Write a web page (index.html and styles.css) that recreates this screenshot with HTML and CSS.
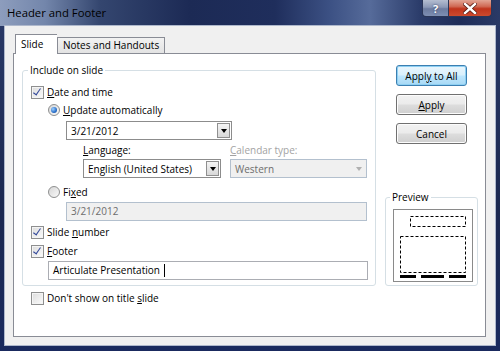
FILE: index.html
```html
<!DOCTYPE html>
<html lang="en">

<head>
    <meta charset="UTF-8">
    <title>Header and Footer</title>
    <link rel="stylesheet" href="styles.css">
</head>

<body>
    <div class="window">
        <div class="titlebar">
            <span class="title">Header and Footer</span>
            <div class="caption-btns">
                <span class="cap-btn help">?</span>
                <span class="cap-btn close">
                    <svg width="14" height="11" viewBox="0 0 14 11">
                        <path d="M2 1 L12 10 M12 1 L2 10" stroke="#5a1c14" stroke-width="4" stroke-linecap="square" />
                        <path d="M2 1 L12 10 M12 1 L2 10" stroke="#fff" stroke-width="2.4" stroke-linecap="square" />
                    </svg>
                </span>
            </div>
        </div>

        <div class="client">
            <div class="tabs">
                <div class="tab active">Slide</div>
                <div class="tab">Notes and Handouts</div>
            </div>

            <div class="panel">
                <div class="main-col">
                    <fieldset class="group include">
                        <legend>Include on slide</legend>

                        <div class="row">
                            <span class="checkbox checked"></span>
                            <span><u>D</u>ate and time</span>
                        </div>
                        <div class="row indent-1">
                            <span class="radio on"></span>
                            <span><u>U</u>pdate automatically</span>
                        </div>
                        <div class="combo date-combo">
                            <span class="combo-text">3/21/2012</span>
                            <span class="combo-btn"></span>
                        </div>

                        <div class="lang-row">
                            <div class="field lang-field">
                                <div class="field-label"><u>L</u>anguage:</div>
                                <div class="combo">
                                    <span class="combo-text">English (United States)</span>
                                    <span class="combo-btn"></span>
                                </div>
                            </div>
                            <div class="field cal-field">
                                <div class="field-label disabled"><u>C</u>alendar type:</div>
                                <div class="combo disabled">
                                    <span class="combo-text">Western</span>
                                    <span class="combo-btn"></span>
                                </div>
                            </div>
                        </div>

                        <div class="row indent-1 fixed-row">
                            <span class="radio"></span>
                            <span>Fi<u>x</u>ed</span>
                        </div>
                        <div class="textbox disabled fixed-box">3/21/2012</div>

                        <div class="row slide-row">
                            <span class="checkbox checked"></span>
                            <span>Slide <u>n</u>umber</span>
                        </div>
                        <div class="row footer-row">
                            <span class="checkbox checked"></span>
                            <span><u>F</u>ooter</span>
                        </div>
                        <div class="textbox footer-box">Articulate Presentation<span class="caret"></span></div>
                    </fieldset>

                    <div class="row title-slide-row">
                        <span class="checkbox"></span>
                        <span>Don't show on title <u>s</u>lide</span>
                    </div>
                </div>

                <div class="side-col">
                    <button class="btn default">Appl<u>y</u> to All</button>
                    <button class="btn"><u>A</u>pply</button>
                    <button class="btn">Cancel</button>

                    <fieldset class="group preview">
                        <legend>Preview</legend>
                        <div class="preview-box">
                            <svg width="78" height="71" viewBox="0 0 78 71">
                                <rect x="16.5" y="6.5" width="55" height="10" fill="none" stroke="#000" stroke-dasharray="3 2" />
                                <rect x="6.5" y="26.5" width="65" height="36" fill="none" stroke="#000" stroke-dasharray="3 2" />
                                <rect x="6" y="65" width="16" height="3" fill="#000" />
                                <rect x="27" y="65" width="23" height="3" fill="#000" />
                                <rect x="55" y="65" width="17" height="3" fill="#000" />
                            </svg>
                        </div>
                    </fieldset>
                </div>
            </div>
        </div>
    </div>
</body>

</html>
```

FILE: styles.css
```css
body {
    margin: 0;
    padding: 0;
    font-family: "Open Sans", "Noto Sans", sans-serif;
    font-size: 10px;
    color: black;
    background: #1d2a55;
}

u {
    text-decoration: underline;
    text-underline-offset: 1px;
}

.window {
    width: 500px;
    height: 351px;
    display: flex;
    flex-direction: column;
    background: linear-gradient(180deg, #2a3a68, #1b2850 60%, #1a2a5e);
    box-sizing: border-box;
}

/* Title bar */
.titlebar {
    height: 26px;
    display: flex;
    justify-content: space-between;
    align-items: flex-start;
    background: linear-gradient(90deg, #8d9dbd 0%, #7386ab 9%, #34466f 20%, #1c2a55 38%, #1f2e5c 55%, #3c5184 66%, #566b9a 74%, #2b3c6a 84%, #1e2c58 92%, #2a3a66 100%);
}

.title {
    padding-left: 7px;
    line-height: 26px;
    font-size: 11.3px;
    color: #000;
}

.caption-btns {
    display: flex;
    margin-right: 8px;
}

.cap-btn {
    height: 17px;
    display: flex;
    justify-content: center;
    align-items: center;
    box-sizing: border-box;
    border: 1px solid #2a3658;
    border-top: none;
}

.cap-btn.help {
    width: 27px;
    border-radius: 0 0 0 4px;
    background: linear-gradient(180deg, #b4bdd0 0%, #8b98b6 45%, #6c7b9f 55%, #7d8eb3 100%);
    color: white;
    font-weight: bold;
    font-size: 11px;
    text-shadow: 0 0 2px #1d2a50;
}

.cap-btn.close {
    width: 43px;
    border-left: none;
    border-radius: 0 0 4px 0;
    background: linear-gradient(180deg, #e2a595 0%, #d06a55 40%, #c0341c 55%, #cc4a2e 100%);
}

/* Dialog body */
.client {
    flex: 1;
    margin: 0 5px 6px;
    padding: 8px 9px 8px 8px;
    background: #f0f0f0;
    box-shadow: 0 0 0 1px #aeb8cc;
    display: flex;
    flex-direction: column;
}

.tabs {
    display: flex;
    align-items: flex-end;
    height: 19px;
    padding-left: 2px;
}

.tab {
    height: 16px;
    line-height: 15px;
    padding: 0 5px;
    border: 1px solid #898c95;
    border-bottom: none;
    background: linear-gradient(180deg, #f2f2f2, #e3e3e3);
    box-sizing: border-box;
}

.tab.active {
    height: 20px;
    line-height: 19px;
    width: 42px;
    margin-bottom: -1px;
    background: white;
    position: relative;
    z-index: 1;
    border-right: none;
}

.panel {
    flex: 1;
    display: flex;
    background: white;
    border: 1px solid #898c95;
    padding: 0 7px 0 8px;
    gap: 9px;
}

.main-col {
    width: 354px;
    margin-top: 9px;
}

.group {
    margin: 0;
    border: 1px solid #d5dfe5;
    border-radius: 3px;
    min-width: 0;
    box-sizing: border-box;
}

.group legend {
    line-height: 14px;
    padding: 0 2px;
    margin-left: -3px;
}

.include {
    width: 354px;
    padding: 6px 8px 5px;
}

.row {
    display: flex;
    align-items: center;
    height: 18px;
    gap: 3px;
}

.indent-1 {
    margin-left: 17px;
}

.checkbox {
    width: 13px;
    height: 13px;
    box-sizing: border-box;
    border: 1px solid #8e8f8f;
    background: linear-gradient(135deg, #dcdcdc, #fbfbfb);
    box-shadow: inset 0 0 0 1px #f4f4f4;
    position: relative;
}

.checkbox.checked::after {
    content: "";
    position: absolute;
    left: 3px;
    top: 0px;
    width: 3px;
    height: 7px;
    border: solid #33489a;
    border-width: 0 1.5px 1.5px 0;
    transform: rotate(35deg);
}

.radio {
    width: 12px;
    height: 12px;
    box-sizing: border-box;
    border: 1px solid #8e8f8f;
    border-radius: 50%;
    background: linear-gradient(135deg, #d6d6d6, #fafafa);
    display: flex;
    justify-content: center;
    align-items: center;
}

.radio.on::after {
    content: "";
    width: 6px;
    height: 6px;
    border-radius: 50%;
    background: radial-gradient(circle at 35% 35%, #9dd0ff, #2a6fc9 60%, #1c4d99);
}

/* Combos and text boxes */
.combo {
    height: 19px;
    display: flex;
    align-items: center;
    justify-content: space-between;
    border: 1px solid #8c8c8c;
    box-sizing: border-box;
    background: white;
    padding: 1px;
}

.combo-text {
    padding-left: 3px;
}

.combo-btn {
    width: 13px;
    height: 15px;
    box-sizing: border-box;
    border: 1px solid #8f8f8f;
    background: linear-gradient(180deg, #f4f4f4, #d8d8d8);
    display: flex;
    justify-content: center;
    align-items: center;
}

.combo-btn::after {
    content: "";
    border-left: 3.5px solid transparent;
    border-right: 3.5px solid transparent;
    border-top: 4px solid #000;
}

.combo.disabled {
    background: #f0f0f0;
    border-color: #b3c0ce;
    color: #6d6d6d;
}

.combo.disabled .combo-btn {
    border: none;
    background: none;
}

.combo.disabled .combo-btn::after {
    border-top-color: #b0b0b0;
}

.date-combo {
    width: 166px;
    margin: 2px 0 0 35px;
}

.lang-row {
    display: flex;
    gap: 9px;
    margin: 3px 0 0 52px;
}

.field-label {
    height: 15px;
    line-height: 15px;
    margin-bottom: 1px;
}

.field-label.disabled {
    color: #a3a3a3;
}

.lang-field {
    width: 138px;
}

.cal-field {
    width: 137px;
}

.fixed-row {
    margin-top: 5px;
}

.textbox {
    height: 19px;
    line-height: 17px;
    box-sizing: border-box;
    border: 1px solid #abadb3;
    padding-left: 4px;
    background: white;
    display: flex;
    align-items: center;
}

.textbox.disabled {
    background: #f0f0f0;
    border-color: #b3c0ce;
    color: #6d6d6d;
}

.fixed-box {
    width: 301px;
    margin: 1px 0 0 35px;
}

.slide-row {
    margin-top: 2px;
}

.footer-row {
    margin-top: 1px;
}

.footer-box {
    width: 320px;
    margin: 1px 0 0 17px;
}

.caret {
    width: 1px;
    height: 13px;
    background: black;
    margin-left: 4px;
}

.title-slide-row {
    margin: 3px 0 0 9px;
}

/* Right column */
.side-col {
    width: 93px;
    margin-top: 11px;
    display: flex;
    flex-direction: column;
    align-items: center;
}

.btn {
    width: 71px;
    height: 21px;
    margin-bottom: 8px;
    padding: 0;
    font-family: inherit;
    font-size: 10px;
    color: black;
    border: 1px solid #707070;
    border-radius: 3px;
    background: linear-gradient(180deg, #f2f2f2 0%, #ebebeb 48%, #dddddd 52%, #cfcfcf 100%);
    box-shadow: inset 0 0 0 1px #fcfcfc;
}

.btn.default {
    border-color: #3c7fb1;
    background: linear-gradient(180deg, #eaf6fd 0%, #d9f0fc 48%, #bee6fd 52%, #a7d9f5 100%);
    box-shadow: inset 0 0 0 1px #8ed0f3;
}

.preview {
    width: 93px;
    margin-top: 38px;
    padding: 5px 6px 3px 7px;
}

.preview-box {
    width: 80px;
    height: 73px;
    box-sizing: border-box;
    border: 1px solid #8a8a8a;
    background: white;
}

.preview-box svg {
    display: block;
}
```
